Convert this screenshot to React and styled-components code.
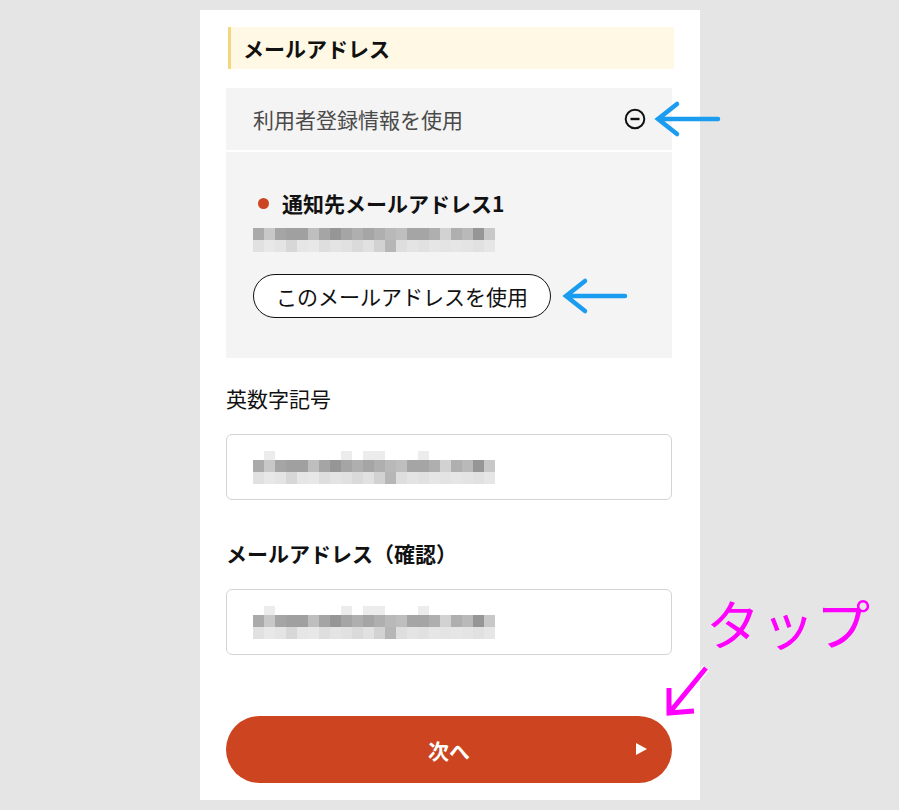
import React from 'react'
import styled, { createGlobalStyle } from 'styled-components'

const GlobalStyle = createGlobalStyle`
    body {
        margin: 0;
        background: #e5e5e5;
        font-family: "Noto Sans CJK JP", "Noto Sans", sans-serif;
        color: #111;
    }
`

const Stage = styled.div`
    position: relative;
    width: 899px;
    height: 810px;
    padding-top: 10px;
    box-sizing: border-box;
`

const Panel = styled.div`
    width: 500px;
    margin-left: 200px;
    background: #fff;
    padding: 17px 28px 17px 26px;
    box-sizing: border-box;
    display: flex;
    flex-direction: column;
`

const SectionTitle = styled.h2`
    margin: 0 -2px 0 2px;
    height: 42px;
    display: flex;
    align-items: center;
    padding-left: 12px;
    background: #fff8e4;
    border-left: 3px solid #f3d77c;
    font-size: 21px;
    font-weight: 700;
`

const Accordion = styled.div`
    margin-top: 19px;
    background: #f4f4f4;
`

const AccordionHead = styled.div`
    height: 62px;
    display: flex;
    align-items: center;
    justify-content: space-between;
    padding: 0 26px 0 27px;
    border-bottom: 2px solid #fff;
    font-size: 21px;
    color: #4a4a4a;
`

const AccordionBody = styled.div`
    padding: 38px 27px 40px;
    display: flex;
    flex-direction: column;
    align-items: flex-start;
`

const NoticeTitle = styled.div`
    display: flex;
    align-items: center;
    gap: 13px;
    height: 26px;
    margin-left: 5px;
    font-size: 21px;
    font-weight: 700;
    &::before {
        content: '';
        width: 11px;
        height: 11px;
        border-radius: 50%;
        background: #cc4520;
    }
`

const Blur = styled.svg`
    display: block;
    margin-top: ${p => p.$top || 0}px;
`

const PillButton = styled.button`
    margin-top: 22px;
    height: 44px;
    padding: 0 22px;
    border: 1.5px solid #111;
    border-radius: 22px;
    background: #fff;
    font-family: inherit;
    font-size: 21px;
    color: #111;
`

const Label = styled.div`
    margin-top: ${p => p.$top}px;
    line-height: 26px;
    font-size: 21px;
    font-weight: ${p => (p.$bold ? 700 : 400)};
`

const Field = styled.div`
    margin-top: 23px;
    height: 66px;
    border: 1.5px solid #d4d4d4;
    border-radius: 6px;
    box-sizing: border-box;
    display: flex;
    align-items: center;
    padding-left: 26px;
`

const NextButton = styled.button`
    position: relative;
    margin-top: 61px;
    height: 67px;
    border: none;
    border-radius: 34px;
    background: #cc4520;
    color: #fff;
    font-family: inherit;
    font-size: 21px;
    font-weight: 700;
    &::after {
        content: '';
        position: absolute;
        right: 25px;
        top: 27px;
        border-left: 11px solid #fff;
        border-top: 6.5px solid transparent;
        border-bottom: 6.5px solid transparent;
    }
`

const Overlay = styled.svg`
    position: absolute;
    left: ${p => p.$x}px;
    top: ${p => p.$y}px;
    overflow: visible;
`

const TapNote = styled.div`
    position: absolute;
    left: 706px;
    top: 588px;
    font-size: 54px;
    line-height: 70px;
    color: #ff00ff;
    font-weight: 400;
    letter-spacing: 1px;
`

const headRow = [0, 1, 0, 0, 0, 0, 0, 0, 1, 0, 1, 1, 0, 0, 0, 1, 0, 0, 0, 0, 0, 0]
const rowMid = [170, 200, 165, 160, 160, 190, 165, 150, 165, 175, 165, 175, 185, 190, 165, 165, 175, 210, 175, 185, 150, 200]
const rowLow = [225, 232, 228, 215, 230, 232, 222, 228, 225, 218, 225, 210, 182, 222, 228, 225, 230, 228, 230, 228, 225, 230]

function Pixelated({ top, withHead }) {
    const cell = 11
    const offset = withHead ? 9 : 0
    return (
        <Blur width={242} height={offset + 24} $top={top}>
            {withHead &&
                headRow.map((v, i) =>
                    v ? <rect key={'t' + i} x={i * cell} y={0} width={cell} height={offset} fill="#ececec" /> : null
                )}
            {rowMid.map((g, i) => (
                <rect key={'m' + i} x={i * cell} y={offset} width={cell} height={12} fill={`rgb(${g},${g},${g})`} />
            ))}
            {rowLow.map((g, i) => (
                <rect key={'l' + i} x={i * cell} y={offset + 12} width={cell} height={12} fill={`rgb(${g},${g},${g})`} />
            ))}
        </Blur>
    )
}

function MinusCircle() {
    return (
        <svg width="22" height="22" viewBox="0 0 22 22">
            <circle cx="11" cy="11" r="9.3" fill="none" stroke="#111" strokeWidth="2" />
            <line x1="6.5" y1="11" x2="15.5" y2="11" stroke="#111" strokeWidth="2.4" />
        </svg>
    )
}

function BlueArrow({ x, y, len }) {
    return (
        <Overlay $x={x} $y={y} width={len} height={34}>
            <path
                d={`M3 17 H${len} M22 2 L3 17 L22 32`}
                fill="none"
                stroke="#1a9cf0"
                strokeWidth="4.5"
                strokeLinecap="round"
                strokeLinejoin="miter"
            />
        </Overlay>
    )
}

export default function App() {
    return (
        <>
            <GlobalStyle />
            <Stage>
                <Panel>
                    <SectionTitle>メールアドレス</SectionTitle>
                    <Accordion>
                        <AccordionHead>
                            利用者登録情報を使用
                            <MinusCircle />
                        </AccordionHead>
                        <AccordionBody>
                            <NoticeTitle>通知先メールアドレス1</NoticeTitle>
                            <Pixelated top={12} />
                            <PillButton>このメールアドレスを使用</PillButton>
                        </AccordionBody>
                    </Accordion>
                    <Label $top={27}>英数字記号</Label>
                    <Field>
                        <Pixelated withHead />
                    </Field>
                    <Label $top={40} $bold>
                        メールアドレス（確認）
                    </Label>
                    <Field>
                        <Pixelated withHead />
                    </Field>
                    <NextButton>次へ</NextButton>
                </Panel>

                <BlueArrow x={655} y={102} len={63} />
                <BlueArrow x={563} y={279} len={62} />

                <TapNote>タップ</TapNote>
                <Overlay $x={664} $y={664} width={50} height={54}>
                    <path
                        d="M42 4 L6 48 M5 24 L5 49 L30 47"
                        fill="none"
                        stroke="#fff"
                        strokeWidth="8"
                    />
                    <path
                        d="M42 4 L6 48 M5 24 L5 49 L30 47"
                        fill="none"
                        stroke="#ff00ff"
                        strokeWidth="5"
                    />
                </Overlay>
            </Stage>
        </>
    )
}
